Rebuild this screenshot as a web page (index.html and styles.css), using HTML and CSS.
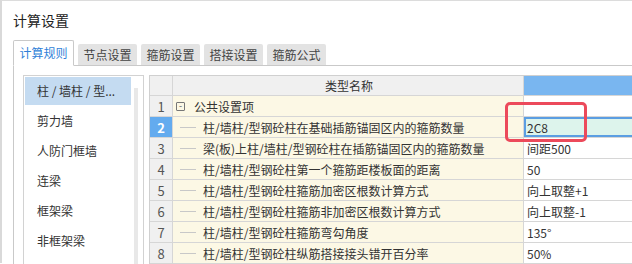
FILE: index.html
```html
<!doctype html>
<html>
<head>
<meta charset="utf-8">
<title>计算设置</title>
<link rel="stylesheet" href="styles.css">
</head>
<body>
<div class="dialog">
  <div class="title">计算设置</div>
  <div class="tabs">
    <div class="tab active">计算规则</div>
    <div class="tab">节点设置</div>
    <div class="tab">箍筋设置</div>
    <div class="tab">搭接设置</div>
    <div class="tab">箍筋公式</div>
  </div>
  <div class="panel">
    <div class="list">
      <div class="items">
        <div class="item sel">柱 / 墙柱 / 型...</div>
        <div class="item">剪力墙</div>
        <div class="item">人防门框墙</div>
        <div class="item">连梁</div>
        <div class="item">框架梁</div>
        <div class="item">非框架梁</div>
      </div>
      <div class="scroll"></div>
    </div>
    <div class="grid">
      <div class="row head">
        <div class="num"></div>
        <div class="name center">类型名称</div>
        <div class="val hl"></div>
      </div>
      <div class="row">
        <div class="num">1</div>
        <div class="name"><span class="fold">-</span>公共设置项</div>
        <div class="val"></div>
      </div>
      <div class="row">
        <div class="num cur">2</div>
        <div class="name"><span class="line"></span>柱/墙柱/型钢砼柱在基础插筋锚固区内的箍筋数量</div>
        <div class="val edit">2C8</div>
      </div>
      <div class="row">
        <div class="num">3</div>
        <div class="name"><span class="line"></span>梁(板)上柱/墙柱/型钢砼柱在插筋锚固区内的箍筋数量</div>
        <div class="val">间距500</div>
      </div>
      <div class="row">
        <div class="num">4</div>
        <div class="name"><span class="line"></span>柱/墙柱/型钢砼柱第一个箍筋距楼板面的距离</div>
        <div class="val">50</div>
      </div>
      <div class="row">
        <div class="num">5</div>
        <div class="name"><span class="line"></span>柱/墙柱/型钢砼柱箍筋加密区根数计算方式</div>
        <div class="val">向上取整+1</div>
      </div>
      <div class="row">
        <div class="num">6</div>
        <div class="name"><span class="line"></span>柱/墙柱/型钢砼柱箍筋非加密区根数计算方式</div>
        <div class="val">向上取整-1</div>
      </div>
      <div class="row">
        <div class="num">7</div>
        <div class="name"><span class="line"></span>柱/墙柱/型钢砼柱箍筋弯勾角度</div>
        <div class="val">135°</div>
      </div>
      <div class="row">
        <div class="num">8</div>
        <div class="name"><span class="line"></span>柱/墙柱/型钢砼柱纵筋搭接接头错开百分率</div>
        <div class="val">50%</div>
      </div>
    </div>
  </div>
</div>
<div class="mark"></div>
</body>
</html>
```

FILE: styles.css
```css
body {
	margin: 0;
	width: 632px;
	height: 264px;
	overflow: hidden;
	background: #fff;
	color: #333;
	font: 12px "Noto Sans CJK SC", "Microsoft YaHei", sans-serif;
	position: relative;
}
.dialog {
	border-top: 1px solid #dcdcdc;
	border-left: 2px solid #d9d9d9;
	padding-left: 11px;
	height: 263px;
	box-sizing: border-box;
}
.title {
	height: 40px;
	line-height: 38px;
	font-size: 14px;
	color: #222;
}
/* ---------- tabs ------------- */
.tabs {
	display: flex;
	align-items: flex-end;
	gap: 4px;
	height: 24px;
	border-bottom: 1px solid #c9c9c9;
}
.tab {
	width: 59px;
	height: 21px;
	line-height: 21px;
	text-align: center;
	background: #e3e3e3;
	color: #444;
	border-radius: 2px 2px 0 0;
}
.tab.active {
	width: 59px;
	height: 24px;
	line-height: 23px;
	background: #fff;
	color: #2f7fd8;
	border: 1px solid #c9c9c9;
	border-bottom-color: #fff;
	margin-bottom: -1px;
}
/* ---------- panel ------------- */
.panel {
	display: flex;
	align-items: flex-start;
	gap: 5px;
	border-left: 1px solid #c9c9c9;
	padding: 9px 0 0 9px;
	height: 189px;
}
.list {
	display: flex;
	width: 119px;
	height: 188px;
	border: 1px solid #d2d2d2;
	border-bottom: none;
	flex: none;
}
.items {
	padding: 1px 0 0 1px;
	width: 106px;
}
.item {
	height: 28px;
	line-height: 28px;
	margin-bottom: 2px;
	padding-left: 12px;
	white-space: nowrap;
}
.item.sel {background: #c4dbf1;}
.scroll {
	width: 4px;
	height: 176px;
	margin: 12px 0 0 3px;
	background: #e8e8e8;
}
/* ---------- grid ------------- */
.grid {
	border-left: 1px solid #d0d0d0;
	border-top: 1px solid #d0d0d0;
	flex: none;
}
.row {
	display: flex;
	height: 21px;
}
.row.head {height: 20px;}
.row > div {
	border-right: 1px solid #d6d6d6;
	border-bottom: 1px solid #d6d6d6;
	display: flex;
	align-items: center;
	white-space: nowrap;
	overflow: hidden;
}
.num {
	width: 22px;
	justify-content: center;
	background: #f0f0f0;
	font-size: 13px;
	color: #555;
}
.num.cur {
	background: #63abef;
	color: #fff;
	font-weight: bold;
}
.name {
	background: #fcf8e5;
	padding-left: 2px;
}
.row > .name {width: 348px;}
.head > div {background: #f0f0f0;}
.head > .name.center {justify-content: center;}
.head > .val.hl {background: #79b6f0;}
.row > .val {
	width: 105px;
	padding-left: 3px;
	background: #fff;
	border-right: none;
}
.row > .val.edit {
	background: #ddf4ec;
	box-shadow: inset 2px 0 #5b9ee2, inset 0 2px #5b9ee2, inset 0 -2px #5b9ee2;
}
.fold {
	width: 7px;
	height: 7px;
	border: 1px solid #777;
	border-radius: 1px;
	margin: 0 9px 0 1px;
	font-size: 9px;
	line-height: 6px;
	text-align: center;
	color: #555;
}
.line {
	width: 16px;
	height: 1px;
	background: #c8c8c8;
	margin: 0 7px 0 5px;
}
/* red annotation box */
.mark {
	position: absolute;
	left: 505px;
	top: 102px;
	width: 82px;
	height: 40px;
	box-sizing: border-box;
	border: 3px solid #ec4a5b;
	border-radius: 5px;
}
```
